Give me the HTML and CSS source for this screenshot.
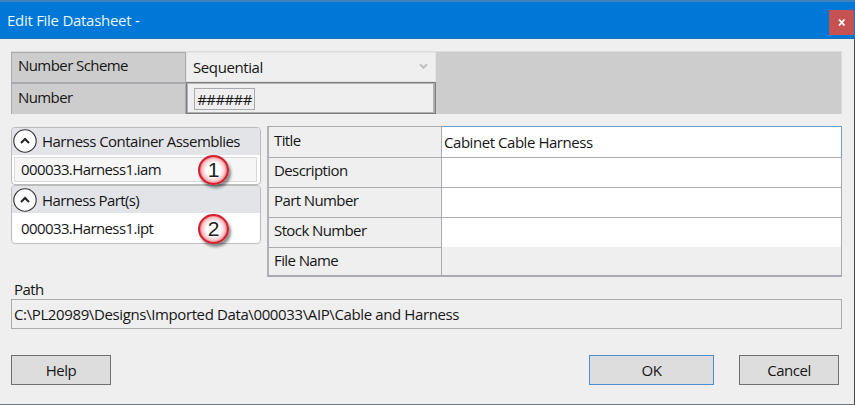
FILE: index.html
```html
<!DOCTYPE html>
<html lang="en">
<head>
<meta charset="utf-8">
<title>Edit File Datasheet</title>
<link rel="stylesheet" href="styles.css">
</head>
<body>
<div class="dialog">
  <header class="titlebar">
    <h1><span class="t-title">Edit File Datasheet -</span></h1>
    <button class="close" aria-label="Close"><svg width="8" height="7" viewBox="0 0 8 7"><path d="M1 .5 6.500 6.500M6.500 .5 1 6.500" stroke="#fff" stroke-width="1.800"/></svg></button>
  </header>
  <main>
    <section class="numbering">
      <div class="num-label"><span class="t-scheme">Number Scheme</span></div>
      <div class="combo"><span class="t-seq">Sequential</span><svg width="9" height="7" viewBox="0 0 9 7"><path d="M1 1.300 4.500 4.800 8 1.300" fill="none" stroke="#bfbfbf" stroke-width="2"/></svg></div>
      <div class="num-label"><span class="t-number">Number</span></div>
      <div class="num-field"><span class="mask"><span class="t-mask">######</span></span></div>
    </section>
    <section class="content">
      <div class="files">
        <div class="group">
          <div class="group-head"><svg width="24" height="24" viewBox="0 0 24 24"><circle cx="12" cy="12" r="11.200" fill="#fff" stroke="#333" stroke-width="1.100"/><path d="M8 14 12 10 16 14" fill="none" stroke="#222" stroke-width="2"/></svg><span class="t-asm">Harness Container Assemblies</span></div>
          <div class="file selected"><span class="t-iam">000033.Harness1.iam</span><i class="badge">1</i></div>
        </div>
        <div class="group">
          <div class="group-head"><svg width="24" height="24" viewBox="0 0 24 24"><circle cx="12" cy="12" r="11.200" fill="#fff" stroke="#333" stroke-width="1.100"/><path d="M8 14 12 10 16 14" fill="none" stroke="#222" stroke-width="2"/></svg><span class="t-parts">Harness Part(s)</span></div>
          <div class="file"><span class="t-ipt">000033.Harness1.ipt</span><i class="badge">2</i></div>
        </div>
      </div>
      <div class="props">
        <div class="key"><span class="t-ttl">Title</span></div><div class="val focus"><span class="t-cab">Cabinet Cable Harness</span></div>
        <div class="key"><span class="t-desc">Description</span></div><div class="val"></div>
        <div class="key"><span class="t-pn">Part Number</span></div><div class="val"></div>
        <div class="key"><span class="t-sn">Stock Number</span></div><div class="val last-edit"></div>
        <div class="key"><span class="t-fn">File Name</span></div><div class="val readonly"></div>
      </div>
    </section>
    <div class="path-label"><span class="t-path">Path</span></div>
    <div class="path-box"><span class="t-full">C:\PL20989\Designs\Imported Data\000033\AIP\Cable and Harness</span></div>
    <footer>
      <button class="btn">Help</button>
      <button class="btn ok">OK</button>
      <button class="btn">Cancel</button>
    </footer>
  </main>
</div>
</body>
</html>
```
FILE: styles.css
```css
* { box-sizing: border-box; }
body { margin: 0; font: 15px/20px "Open Sans", "Noto Sans", sans-serif; letter-spacing: -0.6px; color: #161616; }
span { white-space: nowrap; }
.t-title { letter-spacing: -0.28px; }
.t-scheme { letter-spacing: -0.57px; }
.t-seq { letter-spacing: -0.4px; }
.t-asm { letter-spacing: -0.52px; }
.t-cab { letter-spacing: -0.45px; }
.t-full { letter-spacing: -0.38px; }
.dialog { width: 855px; height: 405px; background: #efefef; display: flex; flex-direction: column; }
.titlebar { height: 39px; flex: none; background: #0078d7; border-top: 2px solid #3f80b8; border-bottom: 1px solid #1b6db4; display: flex; justify-content: space-between; padding: 8px 1px 0 7px; }
h1 { margin: -1px 0 0; font-size: 15px; font-weight: 400; line-height: 22px; color: #e9f5ff; }
.close { width: 25px; height: 25px; padding: 0; border: 0; background: #c75050; display: flex; align-items: center; justify-content: center; }
main { flex: 1; border-right: 1px solid #484848; border-bottom: 1px solid #6c7488; padding: 12px 12px 0 11px; }

.numbering { width: 831px; height: 63px; background: #cdcdcd; border-top: 1px solid #dcdcdc; border-right: 1px solid #dcdcdc; display: grid; grid-template-columns: 175px 250px; grid-template-rows: 30px 32px; }
.num-label { border-left: 1px solid #a9a9b0; border-top: 1px solid #a9a9b0; border-right: 1px solid #a9a9b0; padding: 2px 0 0 6px; }
.num-label:nth-child(3) { border-top-width: 2px; padding-top: 3px; }
.combo { background: #efefef; border: 1px solid #e4e4e4; display: flex; justify-content: space-between; align-items: center; padding: 0 7px 1px 6px; }
.combo svg { position: relative; }
.num-field { background: #efefef; border: 1px solid #7e7e7e; box-shadow: inset -2px -1px #aeaeb2, inset 1px 1px #b4b4b8; padding: 5px 0 0 7px; }
.mask { display: flex; align-items: center; justify-content: center; width: 61px; height: 22px; border: 1px solid #a9a9b0; }

.content { display: flex; align-items: flex-start; gap: 6px; margin-top: 12px; }
.files { width: 250px; padding-top: 1px; }
.group { height: 58px; border: 1px solid #bcbcbc; border-radius: 4px; background: #fff; }
.group + .group { height: 59px; }
.group-head { height: 27px; background: #e3e4e8; border-radius: 3px 3px 0 0; display: flex; align-items: center; gap: 5px; padding: 0 0 1px 1px; }
.group + .group .group-head { padding: 1px 0 0 1px; }
.file { position: relative; margin: 2px 3px 0 2px; height: 25px; border: 1px solid transparent; padding: 1px 0 0 6px; }
.group + .group .file { margin-top: 3px; }
.file.selected { background: #f6f6f6; border-color: #dadada; }
.badge { position: absolute; left: 183px; top: -3px; width: 31px; height: 30px; border: 2px solid #d3202c; border-radius: 50%; background: radial-gradient(circle at 50% 50%, #fff 38%, #f9c6ca 60%, #e56470 75%); box-shadow: 2px 3px 3px rgba(0,0,0,.45); font: 21px/26px "Liberation Sans", sans-serif; text-align: center; letter-spacing: 0; color: #222; }

.props { width: 575px; height: 151px; border: 1px solid #aaaab0; border-left: 2px solid #b2b2b6; border-bottom-width: 2px; display: grid; grid-template-columns: 173px 1fr; grid-template-rows: 31px 30px 30px 30px 27px; }
.key { border-bottom: 1px solid #aaaab0; border-right: 1px solid #aaaab0; padding: 3px 0 0 5px; }
.key:nth-child(n+3) { padding-top: 2px; }
.val { background: #fff; border-bottom: 1px solid #aaaab0; padding: 5px 0 0 2px; }
.val.focus { margin: -1px -1px 0 0; border-top: 1px solid #6e9fce; border-right: 1px solid #6e9fce; }
.val.last-edit { border-bottom-color: #efefef; }
.val.readonly { background: #efefef; border-bottom: 0; }
.key:nth-child(9) { border-bottom: 0; }

.path-label { height: 22px; padding: 2px 0 0 3px; }
.path-box { width: 831px; height: 30px; border: 1px solid #aaaab0; padding: 4px 0 0 2px; }
footer { display: grid; grid-template-columns: 553px 125px 100px; column-gap: 25px; margin-top: 26px; }
.btn { width: 100px; height: 30px; border: 1px solid #707070; background: #ddd; font: inherit; letter-spacing: -0.5px; color: #161616; padding: 0; }
.btn.ok { width: 125px; border-color: #4a90cf; }
```
